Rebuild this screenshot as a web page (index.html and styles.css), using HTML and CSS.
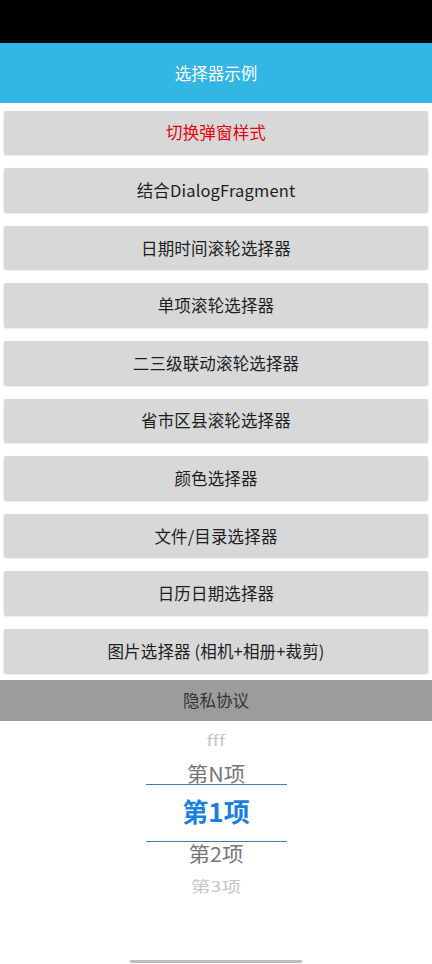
FILE: index.html
```html
<!DOCTYPE html>
<html lang="zh-CN">
<head>
<meta charset="utf-8">
<title>选择器示例</title>
<link rel="stylesheet" href="styles.css">
</head>
<body>
<div class="page">
  <div class="status"></div>
  <div class="appbar">选择器示例</div>
  <div class="buttons">
    <div class="btn red">切换弹窗样式</div>
    <div class="btn">结合DialogFragment</div>
    <div class="btn">日期时间滚轮选择器</div>
    <div class="btn">单项滚轮选择器</div>
    <div class="btn">二三级联动滚轮选择器</div>
    <div class="btn">省市区县滚轮选择器</div>
    <div class="btn">颜色选择器</div>
    <div class="btn">文件/目录选择器</div>
    <div class="btn">日历日期选择器</div>
    <div class="btn">图片选择器 (相机+相册+裁剪)</div>
  </div>
  <div class="privacy">隐私协议</div>
  <div class="wheel">
    <div class="row r1"><span class="far">fff</span></div>
    <div class="row r2"><span class="near">第N项</span></div>
    <div class="row r3"><span class="sel">第1项</span></div>
    <div class="row r4"><span class="near">第2项</span></div>
    <div class="row r5"><span class="far">第3项</span></div>
  </div>
  <div class="homebar"></div>
</div>
</body>
</html>
```
FILE: styles.css
```css
* { box-sizing: border-box; }
html, body { margin: 0; padding: 0; background: #ffffff; }
body {
  font-family: "Noto Sans CJK SC", "Noto Sans", sans-serif;
}
.page {
  width: 432px;
  height: 964px;
  display: flex;
  flex-direction: column;
  overflow: hidden;
}
.status { height: 43px; background: #000000; flex: none; }
.appbar {
  height: 60px;
  flex: none;
  background: #33b5e5;
  color: #ffffff;
  font-size: 16.5px;
  display: flex;
  align-items: center;
  justify-content: center;
}
.buttons {
  display: flex;
  flex-direction: column;
  gap: 14px;
  padding: 7.7px 4px 0;
  flex: none;
}
.btn {
  height: 43.6px;
  background: #d7d8d8;
  border-radius: 2px;
  box-shadow: 0 1px 2px rgba(0, 0, 0, 0.22);
  display: flex;
  align-items: center;
  justify-content: center;
  font-size: 16.5px;
  letter-spacing: 0.15px;
  color: #1e1e1e;
}
.btn.red { color: #e8000b; }
.privacy {
  margin-top: 7.3px;
  height: 41px;
  flex: none;
  background: #9c9c9c;
  color: #333333;
  font-size: 16.5px;
  display: flex;
  align-items: center;
  justify-content: center;
}
.wheel {
  flex: 1;
  display: flex;
  flex-direction: column;
  align-items: center;
  padding-top: 8px;
}
.row {
  display: flex;
  justify-content: center;
  width: 141px;
}
.row span { display: block; line-height: 22px; white-space: nowrap; }
.r1 { height: 22px; align-items: center; }
.r2 { height: 33px; align-items: flex-end; }
.r3 {
  height: 58px;
  align-items: center;
  padding-bottom: 4px;
  border-top: 1px solid #3f7cbd;
  border-bottom: 1px solid #3f7cbd;
}
.r4 { height: 33px; align-items: flex-start; }
.r5 { height: 22px; align-items: center; }
.far {
  color: #c6c6c6;
  font-size: 19.5px;
  transform: scaleY(0.74);
}
.near {
  color: #777777;
  font-size: 21.5px;
  transform: scaleY(0.95);
}
.sel {
  color: #1a7fe3;
  font-size: 26px;
  font-weight: bold;
  line-height: 30px;
}
.homebar {
  flex: none;
  width: 172px;
  height: 3px;
  margin: 0 auto 1px;
  background: #bdbdbd;
  border-radius: 1px;
}
```
